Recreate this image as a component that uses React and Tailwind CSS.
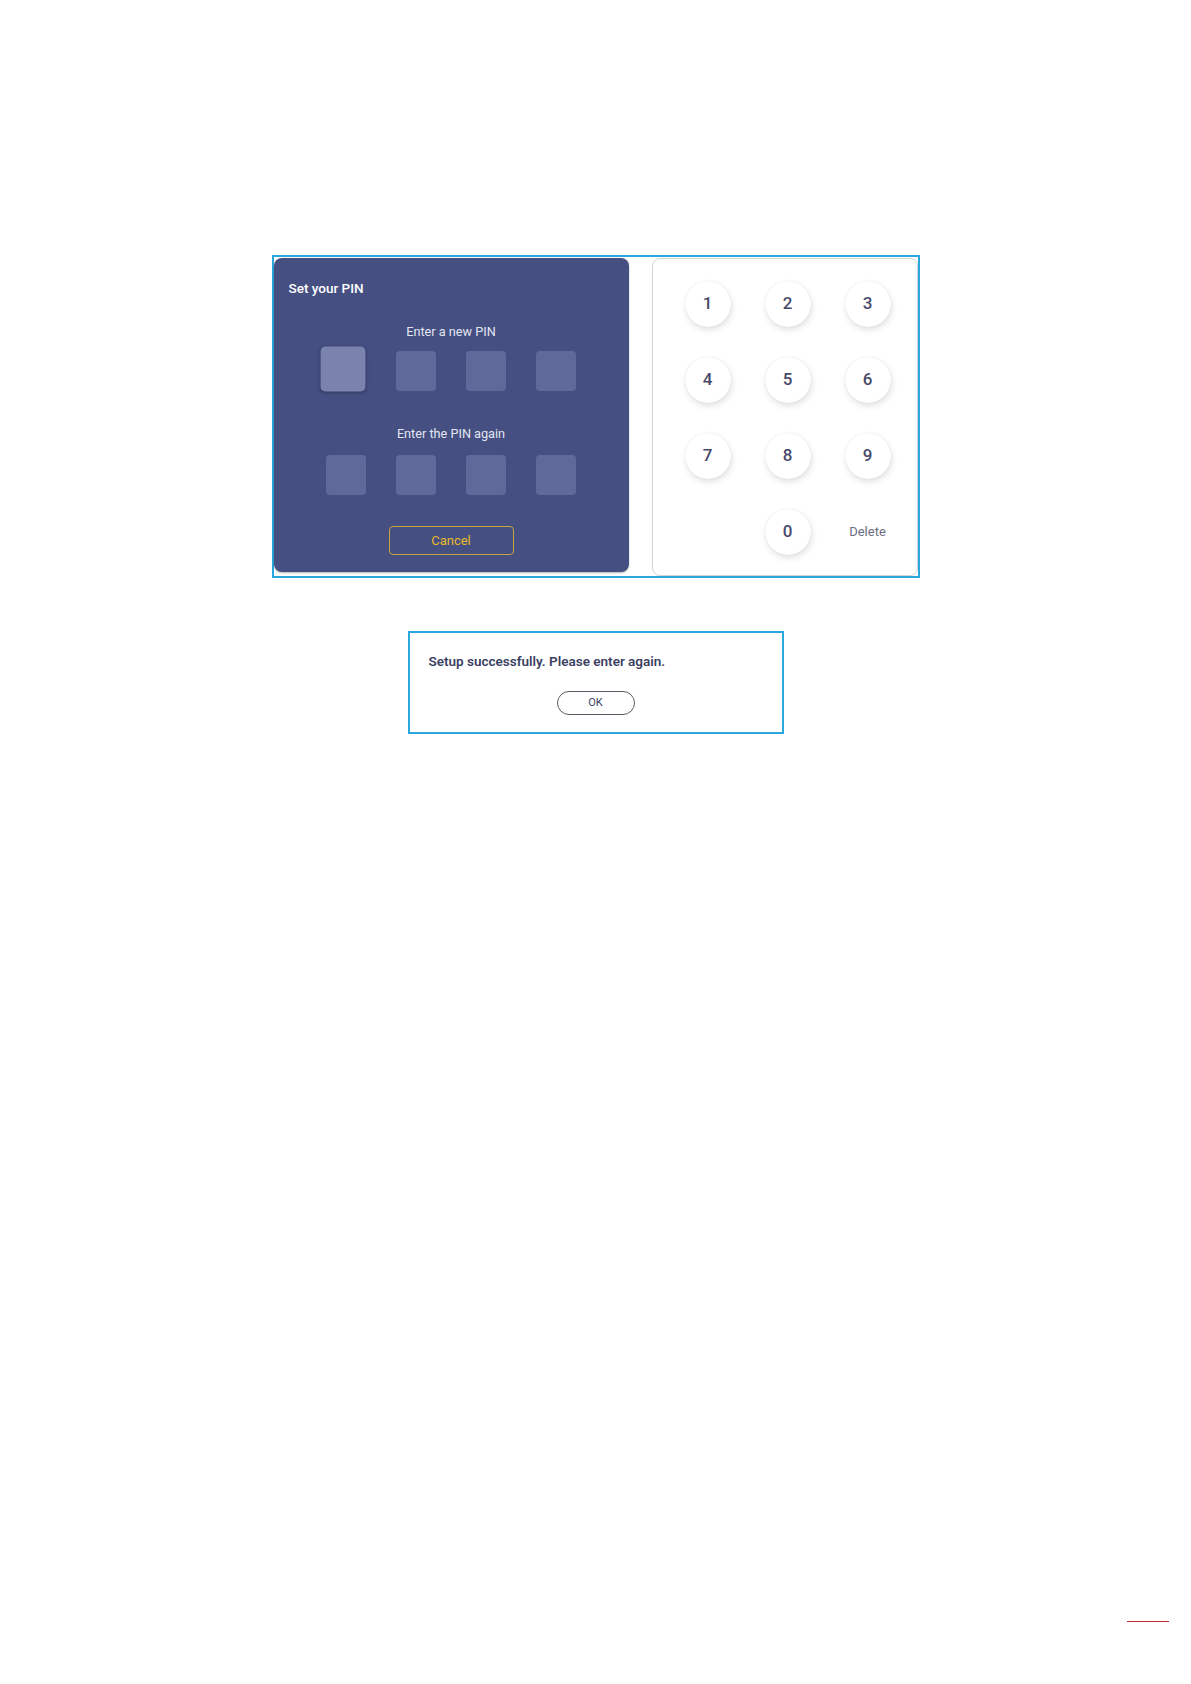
const keys = ["1", "2", "3", "4", "5", "6", "7", "8", "9", "", "0", "Delete"];

function PinRow({ focused }) {
  return (
    <div className="flex h-[45px] items-center justify-center gap-[30px]">
      {[0, 1, 2, 3].map((i) => (
        <div
          className={`h-[40px] w-[40px] rounded-[4px] ${
            focused && i === 0
              ? "-translate-x-[3px] -translate-y-[2px] scale-[1.12] bg-[#7a83ad] shadow-[0_1px_3px_rgba(0,0,0,0.25)]"
              : "bg-[#5f6a9b]"
          }`}
          key={i}
        />
      ))}
    </div>
  );
}

export default function App() {
  return (
    <div className="min-h-[1684px] bg-white pt-[255px] font-['Roboto','Liberation_Sans',sans-serif]">
      <div className="mx-auto flex h-[323px] w-[648px] items-start gap-[23px] border-2 border-[#2aa7dd] pt-[1px]">
        <div className="h-[314px] w-[355px] rounded-[8px] bg-[#454f82] pt-[21px] shadow-[0_1px_2px_rgba(0,0,0,0.3)]">
          <p className="pl-[15px] text-[13.5px] font-medium leading-[18px] text-white">Set your PIN</p>
          <p className="mt-[26px] text-center text-[12.7px] leading-[18px] text-[#e3e6f1]">Enter a new PIN</p>
          <div className="mt-[7px]">
            <PinRow focused />
          </div>
          <p className="mt-[32px] text-center text-[12.7px] leading-[18px] text-[#e3e6f1]">Enter the PIN again</p>
          <div className="mt-[9px]">
            <PinRow />
          </div>
          <div className="mt-[29px] flex justify-center">
            <button
              className="h-[29px] w-[125px] rounded-[4px] border border-[#c9a43a] text-[13px] text-[#e8bb2a]"
              type="button"
            >
              Cancel
            </button>
          </div>
        </div>

        <div className="h-[318px] w-[266px] rounded-[8px] border border-[#d4d4d8] bg-white pl-[15px] pt-[7px]">
          <div className="grid grid-cols-[80px_80px_80px] auto-rows-[76px]">
            {keys.map((key, index) => (
              <div className="flex items-center justify-center" key={index}>
                {key === "" ? null : key === "Delete" ? (
                  <span className="text-[13px] text-[#6b6d80]">Delete</span>
                ) : (
                  <span className="flex h-[46px] w-[46px] items-center justify-center rounded-full bg-white text-[17px] font-medium text-[#474a6a] shadow-[1px_3px_6px_rgba(0,0,0,0.12),0_0_1px_rgba(0,0,0,0.12)]">
                    {key}
                  </span>
                )}
              </div>
            ))}
          </div>
        </div>
      </div>

      <div className="mx-auto mt-[53px] h-[103px] w-[376px] border-2 border-[#2aa7dd] pl-[19px] pt-[18px]">
        <p className="text-[13.5px] font-semibold leading-[20px] text-[#3b3f63]">Setup successfully. Please enter again.</p>
        <div className="mt-[20px] flex justify-center pr-[19px]">
          <button
            className="h-[24px] w-[78px] rounded-full border border-[#5a5a66] text-[11px] text-[#3b3f63]"
            type="button"
          >
            OK
          </button>
        </div>
      </div>

      <div className="mt-[887px] flex justify-end pr-[22px]">
        <div className="h-px w-[42px] bg-[#c8262f]" />
      </div>
    </div>
  );
}
